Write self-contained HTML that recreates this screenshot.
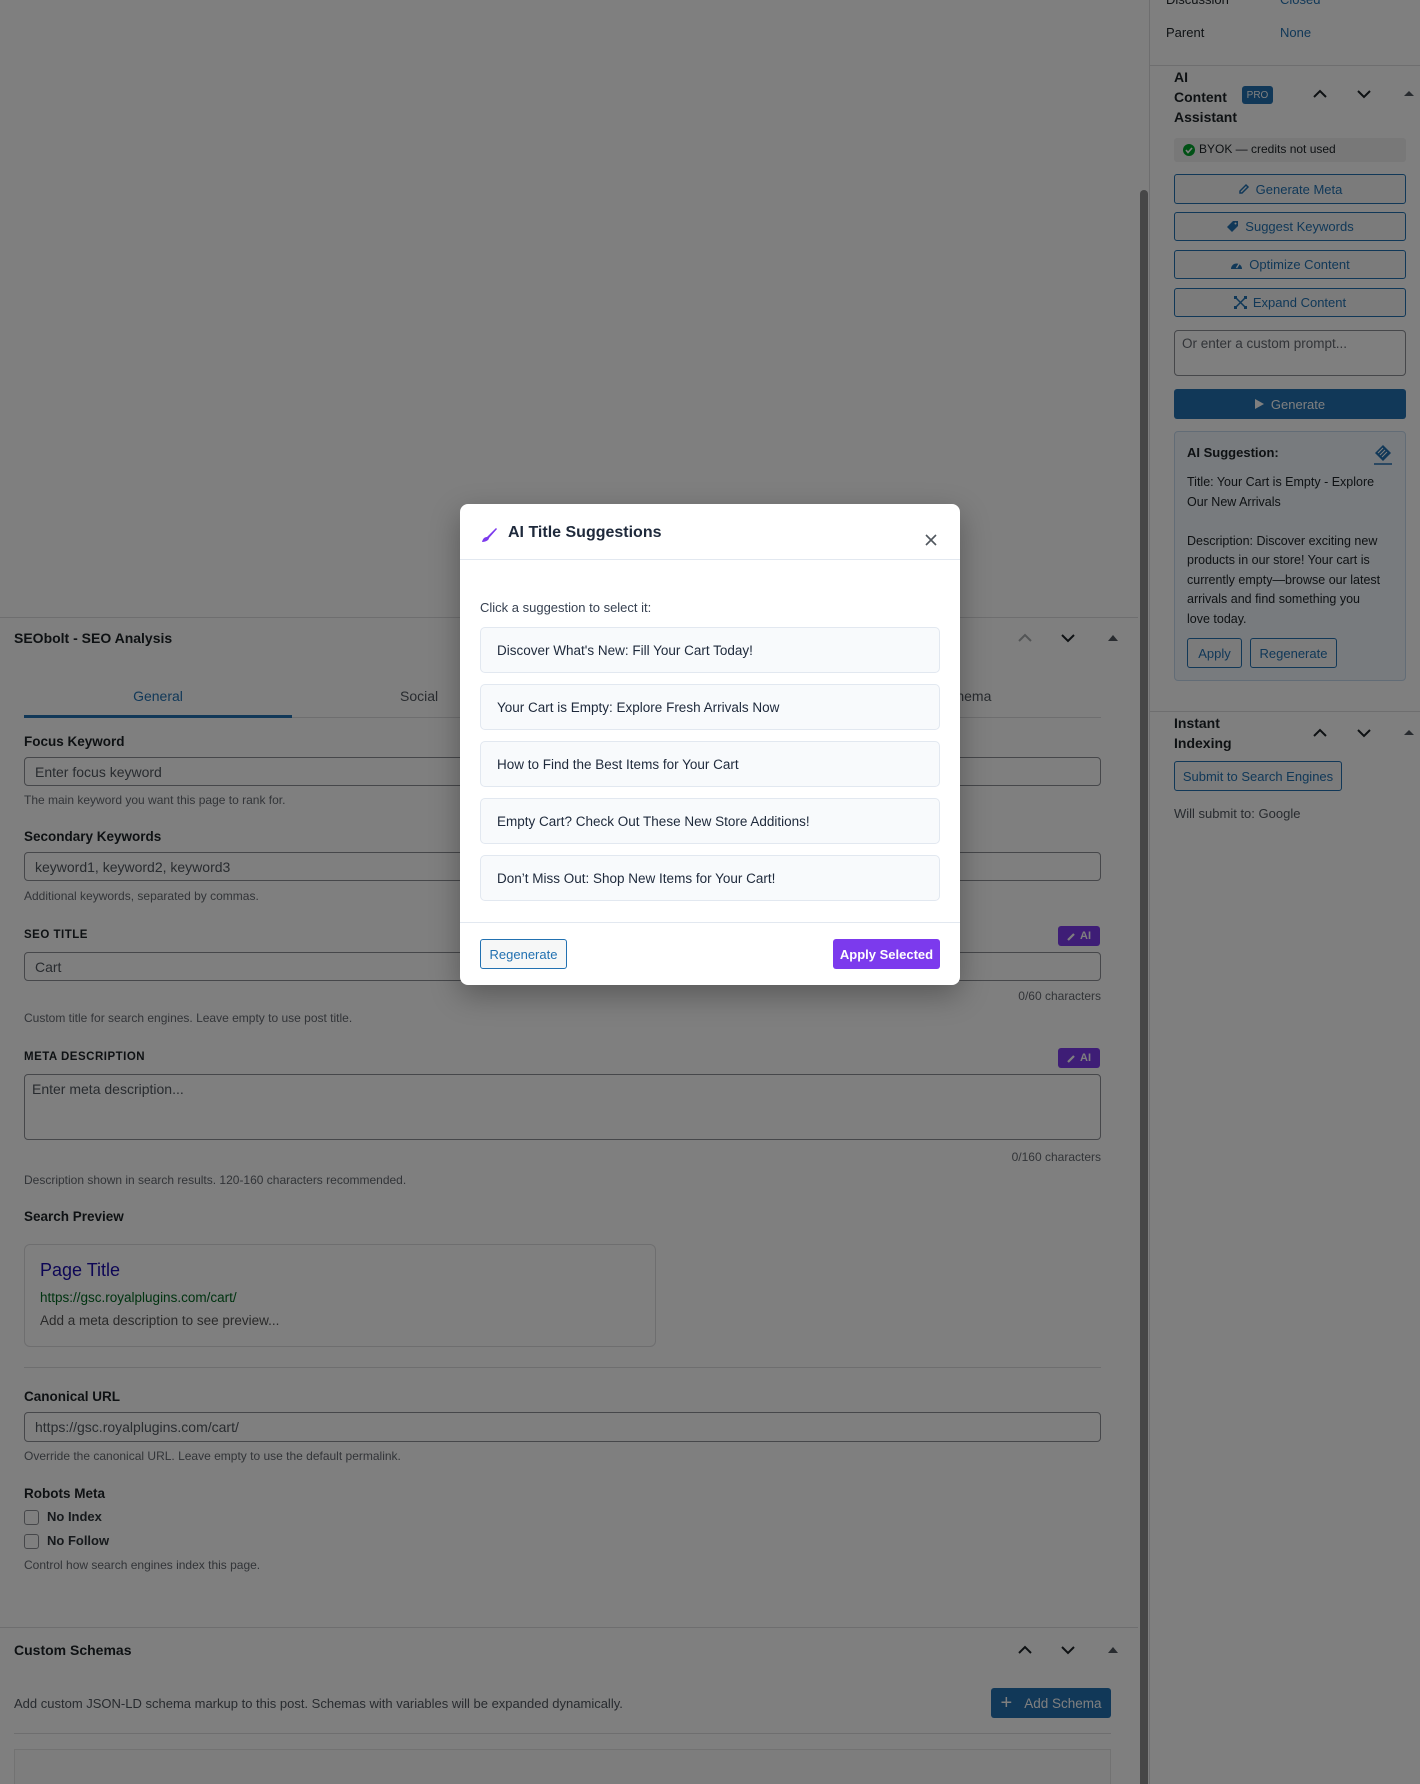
<!DOCTYPE html>
<html><head><meta charset="utf-8"><style>
*{box-sizing:border-box;margin:0;padding:0}
html,body{width:1420px;height:1784px;overflow:hidden;background:#fff;font-family:"Liberation Sans",sans-serif;color:#1d2327}
body{position:relative}
.a{position:absolute;white-space:nowrap}
.lbl{font-size:13.5px;font-weight:bold;color:#1d2327}
.help{font-size:12px;color:#646970}
.inp{position:absolute;border:1px solid #8c8f94;border-radius:4px;background:#fff;font-size:14px;color:#50575e;padding-left:10px;display:flex;align-items:center}
.line{position:absolute;height:1px;background:#dcdcde}
.sbtn{position:absolute;left:1174px;width:232px;border:1px solid #2271b1;border-radius:3px;color:#2271b1;font-size:13px;display:flex;align-items:center;justify-content:center;gap:6px;background:#f6f7f7}
.ai{position:absolute;left:1058px;width:42px;height:20px;background:#7c3aed;border-radius:3px;color:#fff;font-size:11px;font-weight:bold;display:flex;align-items:center;justify-content:center;gap:4px}
.item{position:absolute;left:20px;width:460px;height:46px;border:1px solid #e2e8f0;border-radius:5px;background:#f8fafc;font-size:13.5px;color:#1e293b;padding-left:16px;display:flex;align-items:center}
</style></head><body>

<!-- Main column -->
<div class="line" style="left:0;top:617px;width:1138px"></div>
<div class="a" style="left:14px;top:630px;font-size:14px;font-weight:bold">SEObolt - SEO Analysis</div>
<svg class="a" style="left:1016px;top:630px" width="110" height="16"><polyline points="3,11 9,5 15,11" fill="none" stroke="#a7aaad" stroke-width="2"/><polyline points="46,5 52,11 58,5" fill="none" stroke="#1d2327" stroke-width="2"/><polygon points="92,11 97,5 102,11" fill="#50575e"/></svg>

<div class="a" style="left:24px;width:268px;top:688px;text-align:center;font-size:14px;color:#2271b1">General</div>
<div class="a" style="left:400px;top:688px;font-size:14px;color:#50575e">Social</div>
<div class="a" style="left:940px;top:688px;font-size:14px;color:#50575e">Schema</div>
<div class="line" style="left:24px;top:717px;width:1077px"></div>
<div class="a" style="left:24px;top:715px;width:268px;height:3px;background:#2271b1"></div>

<div class="a lbl" style="left:24px;top:734px">Focus Keyword</div>
<div class="inp" style="left:24px;top:757px;width:1077px;height:29px">Enter focus keyword</div>
<div class="a help" style="left:24px;top:793px">The main keyword you want this page to rank for.</div>

<div class="a lbl" style="left:24px;top:829px">Secondary Keywords</div>
<div class="inp" style="left:24px;top:852px;width:1077px;height:29px">keyword1, keyword2, keyword3</div>
<div class="a help" style="left:24px;top:889px">Additional keywords, separated by commas.</div>

<div class="a" style="left:24px;top:929px;font-size:11.5px;font-weight:bold;letter-spacing:.5px">SEO TITLE</div>
<div class="ai" style="top:926px"><svg width="9" height="9"><path d="M1 8 L7 2" stroke="#fff" stroke-width="2.2"/></svg>AI</div>
<div class="inp" style="left:24px;top:952px;width:1077px;height:29px">Cart</div>
<div class="a help" style="right:319px;top:989px">0/60 characters</div>
<div class="a help" style="left:24px;top:1011px">Custom title for search engines. Leave empty to use post title.</div>

<div class="a" style="left:24px;top:1051px;font-size:11.5px;font-weight:bold;letter-spacing:.5px">META DESCRIPTION</div>
<div class="ai" style="top:1048px"><svg width="9" height="9"><path d="M1 8 L7 2" stroke="#fff" stroke-width="2.2"/></svg>AI</div>
<div class="inp" style="left:24px;top:1074px;width:1077px;height:66px;align-items:flex-start;padding-top:6px;padding-left:7px">Enter meta description...</div>
<div class="a help" style="right:319px;top:1150px">0/160 characters</div>
<div class="a help" style="left:24px;top:1173px">Description shown in search results. 120-160 characters recommended.</div>

<div class="a lbl" style="left:24px;top:1209px">Search Preview</div>
<div class="a" style="left:24px;top:1244px;width:632px;height:103px;border:1px solid #dcdcde;border-radius:6px"></div>
<div class="a" style="left:40px;top:1260px;font-size:18px;color:#1a0dab">Page Title</div>
<div class="a" style="left:40px;top:1290px;font-size:13.5px;color:#006621">https://gsc.royalplugins.com/cart/</div>
<div class="a" style="left:40px;top:1313px;font-size:13.5px;color:#545454">Add a meta description to see preview...</div>
<div class="line" style="left:24px;top:1367px;width:1077px"></div>

<div class="a lbl" style="left:24px;top:1389px">Canonical URL</div>
<div class="inp" style="left:24px;top:1412px;width:1077px;height:30px">https://gsc.royalplugins.com/cart/</div>
<div class="a help" style="left:24px;top:1449px">Override the canonical URL. Leave empty to use the default permalink.</div>
<div class="a lbl" style="left:24px;top:1486px">Robots Meta</div>
<div class="a" style="left:24px;top:1510px;width:15px;height:15px;border:1px solid #8c8f94;border-radius:3px"></div>
<div class="a" style="left:47px;top:1509px;font-size:13px;font-weight:bold;color:#2c3338">No Index</div>
<div class="a" style="left:24px;top:1534px;width:15px;height:15px;border:1px solid #8c8f94;border-radius:3px"></div>
<div class="a" style="left:47px;top:1533px;font-size:13px;font-weight:bold;color:#2c3338">No Follow</div>
<div class="a help" style="left:24px;top:1558px">Control how search engines index this page.</div>

<div class="line" style="left:0;top:1627px;width:1138px"></div>
<div class="a" style="left:14px;top:1642px;font-size:14px;font-weight:bold">Custom Schemas</div>
<svg class="a" style="left:1016px;top:1642px" width="110" height="16"><polyline points="3,11 9,5 15,11" fill="none" stroke="#1d2327" stroke-width="2"/><polyline points="46,5 52,11 58,5" fill="none" stroke="#1d2327" stroke-width="2"/><polygon points="92,11 97,5 102,11" fill="#50575e"/></svg>
<div class="a" style="left:14px;top:1696px;font-size:13px;color:#50575e">Add custom JSON-LD schema markup to this post. Schemas with variables will be expanded dynamically.</div>
<div class="a" style="left:991px;top:1688px;width:120px;height:30px;background:#2271b1;border-radius:3px;color:#fff;font-size:13.5px;display:flex;align-items:center;justify-content:center;gap:12px"><span style="font-size:20px;font-weight:300">+</span>Add Schema</div>
<div class="line" style="left:14px;top:1733px;width:1097px"></div>
<div class="a" style="left:14px;top:1749px;width:1097px;height:35px;border:1px solid #e5e5e5;border-bottom:none;background:#fafafa"></div>

<!-- Sidebar -->
<div class="a" style="left:1149px;top:0;width:1px;height:1784px;background:#dcdcde"></div>
<div class="a" style="left:1166px;top:-8px;font-size:13px">Discussion</div>
<div class="a" style="left:1280px;top:-8px;font-size:13px;color:#2271b1">Closed</div>
<div class="a" style="left:1166px;top:25px;font-size:13px">Parent</div>
<div class="a" style="left:1280px;top:25px;font-size:13px;color:#2271b1">None</div>
<div class="line" style="left:1150px;top:65px;width:270px"></div>
<div class="a" style="left:1174px;top:67px;font-size:14px;font-weight:bold;line-height:20px;white-space:normal">AI<br>Content<br>Assistant</div>
<div class="a" style="left:1242px;top:86px;width:31px;height:18px;background:#2271b1;border-radius:3px;color:#fff;font-size:10px;display:flex;align-items:center;justify-content:center">PRO</div>
<svg class="a" style="left:1312px;top:86px" width="108" height="16"><polyline points="2,11 8,5 14,11" fill="none" stroke="#1d2327" stroke-width="2"/><polyline points="46,5 52,11 58,5" fill="none" stroke="#1d2327" stroke-width="2"/><polygon points="92,10 97,5 102,10" fill="#50575e"/></svg>
<div class="a" style="left:1174px;top:138px;width:232px;height:24px;background:#f0f0f1;border-radius:3px"></div>
<svg class="a" style="left:1183px;top:144px" width="12" height="12"><circle cx="6" cy="6" r="6" fill="#00a32a"/><polyline points="3,6 5,8.5 9,4" fill="none" stroke="#fff" stroke-width="1.6"/></svg>
<div class="a" style="left:1199px;top:142px;font-size:12px;color:#1d2327">BYOK — credits not used</div>

<div class="sbtn" style="top:174px;height:30px"><svg width="12" height="12"><path d="M2 10 L2 8 L8 2 L10 4 L4 10 Z" fill="none" stroke="#2271b1" stroke-width="1.5"/></svg>Generate Meta</div>
<div class="sbtn" style="top:212px;height:29px"><svg width="13" height="13"><path d="M1 7 L7 1 L12 1 L12 6 L6 12 Z" fill="#2271b1"/><circle cx="9.5" cy="3.5" r="1" fill="#fff"/></svg>Suggest Keywords</div>
<div class="sbtn" style="top:250px;height:29px"><svg width="13" height="12"><path d="M1 10 A5.5 5.5 0 1 1 12 10 Z" fill="#2271b1"/><path d="M6.5 9 L9 5" stroke="#fff" stroke-width="1.4"/></svg>Optimize Content</div>
<div class="sbtn" style="top:288px;height:29px"><svg width="13" height="13"><path d="M2 2 L11 11 M11 2 L2 11" stroke="#2271b1" stroke-width="1.5"/><rect x="0" y="0" width="3" height="3" fill="#2271b1"/><rect x="10" y="0" width="3" height="3" fill="#2271b1"/><rect x="0" y="10" width="3" height="3" fill="#2271b1"/><rect x="10" y="10" width="3" height="3" fill="#2271b1"/></svg>Expand Content</div>
<div class="a" style="left:1174px;top:330px;width:232px;height:46px;border:1px solid #8c8f94;border-radius:4px;font-size:13.5px;color:#646970;padding:5px 7px">Or enter a custom prompt...</div>
<div class="a" style="left:1174px;top:389px;width:232px;height:30px;background:#2271b1;border-radius:3px;color:#fff;font-size:13px;display:flex;align-items:center;justify-content:center;gap:7px"><svg width="9" height="10"><polygon points="0,0 9,5 0,10" fill="#fff"/></svg>Generate</div>

<div class="a" style="left:1174px;top:431px;width:232px;height:250px;background:#f0f6fc;border:1px solid #c5d9ed;border-radius:4px"></div>
<div class="a" style="left:1187px;top:445px;font-size:13px;font-weight:bold">AI Suggestion:</div>
<svg class="a" style="left:1372px;top:443px" width="22" height="22"><path d="M3 10 L11 2 L19 10 L11 18 Z" fill="#2271b1"/><path d="M6 10 L11 5 M8 12 L13 7 M10 14 L15 9" stroke="#fff" stroke-width="1"/><line x1="2" y1="21" x2="20" y2="21" stroke="#2271b1" stroke-width="1.5"/></svg>
<div class="a" style="left:1187px;top:473px;font-size:12.5px;line-height:19.5px;color:#1d2327;white-space:nowrap">Title: Your Cart is Empty - Explore<br>Our New Arrivals<br><br>Description: Discover exciting new<br>products in our store! Your cart is<br>currently empty—browse our latest<br>arrivals and find something you<br>love today.</div>
<div class="a" style="left:1187px;top:638px;width:55px;height:30px;border:1px solid #2271b1;border-radius:3px;color:#2271b1;font-size:13px;display:flex;align-items:center;justify-content:center;background:#f6f7f7">Apply</div>
<div class="a" style="left:1250px;top:638px;width:87px;height:30px;border:1px solid #2271b1;border-radius:3px;color:#2271b1;font-size:13px;display:flex;align-items:center;justify-content:center;background:#f6f7f7">Regenerate</div>

<div class="line" style="left:1150px;top:711px;width:270px"></div>
<div class="a" style="left:1174px;top:713px;font-size:14px;font-weight:bold;line-height:20px;white-space:normal">Instant<br>Indexing</div>
<svg class="a" style="left:1312px;top:725px" width="108" height="16"><polyline points="2,11 8,5 14,11" fill="none" stroke="#1d2327" stroke-width="2"/><polyline points="46,5 52,11 58,5" fill="none" stroke="#1d2327" stroke-width="2"/><polygon points="92,10 97,5 102,10" fill="#50575e"/></svg>
<div class="a" style="left:1174px;top:761px;width:168px;height:30px;border:1px solid #2271b1;border-radius:3px;color:#2271b1;font-size:13px;display:flex;align-items:center;justify-content:center;background:#f6f7f7">Submit to Search Engines</div>
<div class="a" style="left:1174px;top:806px;font-size:13px;color:#50575e">Will submit to: Google</div>

<!-- overlay -->
<div class="a" style="left:0;top:0;width:1420px;height:1784px;background:rgba(0,0,0,.5)"></div>
<div class="a" style="left:1140px;top:190px;width:8px;height:1594px;background:#474747;border-radius:4px 4px 0 0"></div>

<!-- modal -->
<div class="a" style="left:460px;top:504px;width:500px;height:481px;background:#fff;border-radius:8px;box-shadow:0 10px 30px rgba(0,0,0,.3)">
  <svg class="a" style="left:20px;top:22px" width="18" height="18"><path d="M2 16 C3 12 5 11 7 11 L16 2 L17 3 L9 12 C9 14 6 16 2 16 Z" fill="#7c3aed"/></svg>
  <div class="a" style="left:48px;top:20px;font-size:16px;font-weight:bold;color:#1e293b">AI Title Suggestions</div>
  <svg class="a" style="left:465px;top:30px" width="12" height="12"><path d="M1 1 L11 11 M11 1 L1 11" stroke="#50575e" stroke-width="1.6"/></svg>
  <div class="a" style="left:0;top:55px;width:500px;height:1px;background:#e2e8f0"></div>
  <div class="a" style="left:20px;top:96px;font-size:13px;color:#374151">Click a suggestion to select it:</div>
  <div class="item" style="top:123px">Discover What's New: Fill Your Cart Today!</div>
  <div class="item" style="top:180px">Your Cart is Empty: Explore Fresh Arrivals Now</div>
  <div class="item" style="top:237px">How to Find the Best Items for Your Cart</div>
  <div class="item" style="top:294px">Empty Cart? Check Out These New Store Additions!</div>
  <div class="item" style="top:351px">Don’t Miss Out: Shop New Items for Your Cart!</div>
  <div class="a" style="left:0;top:418px;width:500px;height:1px;background:#e2e8f0"></div>
  <div class="a" style="left:20px;top:435px;width:87px;height:30px;border:1px solid #2271b1;border-radius:3px;color:#2271b1;font-size:13px;display:flex;align-items:center;justify-content:center;background:#f6f7f7">Regenerate</div>
  <div class="a" style="left:373px;top:435px;width:107px;height:30px;background:#7c3aed;border-radius:3px;color:#fff;font-size:13px;font-weight:bold;display:flex;align-items:center;justify-content:center">Apply Selected</div>
</div>
</body></html>
